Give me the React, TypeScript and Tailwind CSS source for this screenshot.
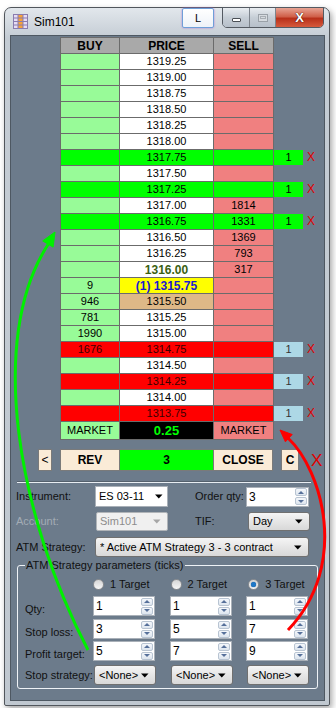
import React from 'react';

type Kind = 'n' | 'g' | 'r';
interface Row {
  price: string;
  buy?: string;
  sell?: string;
  kind?: Kind;
  order?: 'g' | 'b';
  special?: 'last' | 'ask' | 'bid';
}

const rows: Row[] = [
  { price: '1319.25' },
  { price: '1319.00' },
  { price: '1318.75' },
  { price: '1318.50' },
  { price: '1318.25' },
  { price: '1318.00' },
  { price: '1317.75', kind: 'g', order: 'g' },
  { price: '1317.50' },
  { price: '1317.25', kind: 'g', order: 'g' },
  { price: '1317.00', sell: '1814' },
  { price: '1316.75', sell: '1331', kind: 'g', order: 'g' },
  { price: '1316.50', sell: '1369' },
  { price: '1316.25', sell: '793' },
  { price: '1316.00', sell: '317', special: 'last' },
  { price: '(1) 1315.75', buy: '9', special: 'ask' },
  { price: '1315.50', buy: '946', special: 'bid' },
  { price: '1315.25', buy: '781' },
  { price: '1315.00', buy: '1990' },
  { price: '1314.75', buy: '1676', kind: 'r', order: 'b' },
  { price: '1314.50' },
  { price: '1314.25', kind: 'r', order: 'b' },
  { price: '1314.00' },
  { price: '1313.75', kind: 'r', order: 'b' },
];

const cell = 'shrink-0 flex items-center justify-center border-r border-b border-[#6b6b6b] leading-none';

const Arrow = () => (
  <svg className="shrink-0" width="8" height="5" viewBox="0 0 8 5">
    <path d="M0 0.5h7.5L3.75 4.5z" fill="#000" />
  </svg>
);

const Spin = ({ v, w }: { v: string; w: string }) => (
  <div className={`${w} shrink-0 h-[20px] bg-white border border-[#a9b0b8] flex items-center pl-[2px] text-[12px] text-black`}>
    <span className="flex-1">{v}</span>
    <div className="flex flex-col gap-[1px] mr-[1px]">
      <div className="w-[12px] h-[8px] rounded-[2px] border border-[#b8c4d2] bg-[linear-gradient(#f4f7fb,#dde5ee)] flex items-center justify-center">
        <svg width="6" height="3" viewBox="0 0 6 3"><path d="M0 3h6L3 0z" fill="#56709a" /></svg>
      </div>
      <div className="w-[12px] h-[8px] rounded-[2px] border border-[#b8c4d2] bg-[linear-gradient(#f4f7fb,#dde5ee)] flex items-center justify-center">
        <svg width="6" height="3" viewBox="0 0 6 3"><path d="M0 0h6L3 3z" fill="#56709a" /></svg>
      </div>
    </div>
  </div>
);

const Combo = ({ text, w, h = 'h-[20px]' }: { text: string; w: string; h?: string }) => (
  <div className={`${w} ${h} shrink-0 rounded-[3px] border border-[#707070] bg-[linear-gradient(#f5f5f5,#e6e6e6_50%,#d8d8d8)] flex items-center pl-[4px] pr-[6px] text-[11px] text-black`}>
    <span className="flex-1 whitespace-nowrap overflow-hidden">{text}</span>
    <Arrow />
  </div>
);

const Radio = ({ on, label, ml }: { on?: boolean; label: string; ml: string }) => (
  <div className={`${ml} flex items-center`}>
    <div className="w-[11px] h-[11px] rounded-full border border-[#8d8f92] bg-[linear-gradient(#d6d6d6,#f6f6f6)] flex items-center justify-center">
      {on && <div className="w-[5px] h-[5px] rounded-full bg-[#1e78c8] shadow-[0_0_1px_#0b3f78]" />}
    </div>
    <span className="ml-[6px] text-[11px] text-[#111] whitespace-nowrap">{label}</span>
  </div>
);

export default function App() {
  return (
    <div className="relative w-[336px] h-[708px] bg-white pt-[7px] pl-[4px] overflow-hidden font-['Liberation_Sans',Arial,sans-serif]">
      <div className="w-[326px] h-[699px] rounded-t-[7px] rounded-b-[2px] border border-[#51565c] bg-[linear-gradient(180deg,#e2e7ec,#c4ccd4_30px,#c0c8d0)] shadow-[2px_3px_6px_rgba(0,0,0,0.35)] flex flex-col">
        {/* title bar */}
        <div className="h-[27px] flex items-start">
          <div className="flex items-center h-[27px] ml-[8px] flex-1">
            <svg width="15" height="15" viewBox="0 0 15 15">
              <rect x="0.5" y="0.5" width="14" height="14" fill="#e6dcf5" stroke="#8a7cae" />
              <rect x="5" y="1" width="5" height="13" fill="#f6a23a" />
              <path d="M5 0.5v14M10 0.5v14M0.5 4h14M0.5 7.5h14M0.5 11h14" stroke="#8a7cae" strokeWidth="1" />
            </svg>
            <span className="ml-[6px] text-[12px] text-black">Sim101</span>
          </div>
          <div className="w-[32px] h-[20px] rounded-[2px] border border-[#6f9fd8] bg-[linear-gradient(#ffffff,#eef2f8)] shadow-[0_0_2px_#b070d0] flex items-center justify-center text-[11px] text-black">
            L
          </div>
          <div className="ml-[8px] mr-[5px] mt-[-1px] h-[21px] flex rounded-b-[5px] border border-[#545a62] overflow-hidden">
            <div className="w-[27px] h-full border-r border-[#7d848c] bg-[linear-gradient(#e9edf1,#c6ced6_50%,#b7c0ca)] flex items-center justify-center">
              <div className="w-[9px] h-[4px] mt-[4px] bg-white border border-[#4a4f55] rounded-[1px]" />
            </div>
            <div className="w-[26px] h-full border-r border-[#7d848c] bg-[linear-gradient(#e9edf1,#c6ced6_50%,#b7c0ca)] flex items-center justify-center">
              <div className="w-[10px] h-[8px] border border-[#9aa1a8] bg-[#d6dbe0] flex items-center justify-center">
                <div className="w-[6px] h-[3px] border border-[#a8aeb4]" />
              </div>
            </div>
            <div className="w-[47px] h-full bg-[linear-gradient(#e8a494,#d0604a_45%,#b8301a_55%,#d65a3c)] flex items-center justify-center">
              <span className="text-white font-bold text-[13px] leading-none [text-shadow:0_0_1px_#3a1008,0_0_1px_#3a1008]">X</span>
            </div>
          </div>
        </div>

        {/* client */}
        <div className="ml-[5px] w-[315px] h-[666px] border border-[#4e5862] bg-[#6c7b8b] flex flex-col">
          {/* ladder */}
          <div className="mt-[1px] flex flex-col">
            <div className="flex h-[17px] text-[12px] font-bold text-black">
              <div className="w-[49px] shrink-0" />
              <div className={`${cell} w-[60px] border-l border-t bg-[#a9a9a9]`}>BUY</div>
              <div className={`${cell} w-[94px] border-t bg-[#a9a9a9]`}>PRICE</div>
              <div className={`${cell} w-[60px] border-t bg-[#a9a9a9]`}>SELL</div>
            </div>
            {rows.map((r) => {
              const g = r.kind === 'g';
              const red = r.kind === 'r';
              const buyBg = g ? 'bg-[#00ff00]' : red ? 'bg-[#ff0000]' : 'bg-[#98fb98]';
              const sellBg = g ? 'bg-[#00ff00]' : red ? 'bg-[#ff0000]' : 'bg-[#f08080]';
              let priceCls = g ? 'bg-[#00ff00]' : red ? 'bg-[#ff0000]' : 'bg-white';
              let priceTxt = 'text-[11px]';
              if (r.special === 'last') priceTxt = 'text-[12px] font-bold text-[#3b5f12]';
              if (r.special === 'ask') {
                priceCls = 'bg-[#ffff00]';
                priceTxt = 'text-[12px] font-bold text-[#1a1ad0]';
              }
              if (r.special === 'bid') priceCls = 'bg-[#deb887]';
              const txt = red ? 'text-[#3a0000]' : 'text-black';
              return (
                <div key={r.price} className={`flex h-[16px] text-[11px] ${txt}`}>
                  <div className="w-[49px] shrink-0" />
                  <div className={`${cell} w-[60px] border-l ${buyBg}`}>{r.buy}</div>
                  <div className={`${cell} w-[94px] ${priceCls} ${priceTxt}`}>{r.price}</div>
                  <div className={`${cell} w-[60px] ${sellBg}`}>{r.sell}</div>
                  {r.order && (
                    <>
                      <div
                        className={`w-[29px] h-[15px] shrink-0 flex items-center justify-center text-[11px] ${
                          r.order === 'g' ? 'bg-[#00ff00] text-black' : 'bg-[#add8e6] text-[#333]'
                        }`}
                      >
                        1
                      </div>
                      <span className="ml-[4px] text-[12px] leading-[15px] text-[#e00000]">X</span>
                    </>
                  )}
                </div>
              );
            })}
            <div className="flex h-[18px] text-[11px] text-black">
              <div className="w-[49px] shrink-0" />
              <div className={`${cell} w-[60px] border-l bg-[#98fb98]`}>MARKET</div>
              <div className={`${cell} w-[94px] bg-black text-[#00ff00] text-[13px] font-bold`}>0.25</div>
              <div className={`${cell} w-[60px] bg-[#f08080]`}>MARKET</div>
            </div>
          </div>

          {/* buttons */}
          <div className="mt-[9px] h-[22px] flex items-stretch text-[12px] font-bold text-black">
            <div className="shrink-0 ml-[27px] w-[14px] border border-[#7a7a7a] bg-[#faebd7] flex items-center justify-center font-normal">&lt;</div>
            <div className="shrink-0 ml-[8px] w-[60px] border border-[#7a7a7a] bg-[#faebd7] flex items-center justify-center">REV</div>
            <div className="shrink-0 w-[93px] border-y border-[#7a7a7a] bg-[#00ff00] flex items-center justify-center">3</div>
            <div className="shrink-0 w-[60px] border border-[#7a7a7a] bg-[#faebd7] flex items-center justify-center">CLOSE</div>
            <div className="shrink-0 ml-[8px] w-[18px] border border-[#7a7a7a] bg-[#faebd7] flex items-center justify-center">C</div>
            <div className="shrink-0 ml-[12px] flex items-center text-[17px] leading-none font-normal text-[#e00000]">X</div>
          </div>

          {/* separator */}
          <div className="mt-[10px] ml-[6px] w-[294px] h-[2px] border-t border-b border-t-[#55616d] border-b-[#e8edf2]" />

          {/* form */}
          <div className="mt-[3px] flex items-center h-[21px] text-[11px] text-[#111] whitespace-nowrap">
            <span className="shrink-0 ml-[5px] w-[79px]">Instrument:</span>
            <div className="shrink-0 w-[73px] h-[21px] bg-white border border-[#a9b0b8] flex items-center pl-[3px] pr-[4px] text-[11px] text-black">
              <span className="flex-1">ES 03-11</span>
              <Arrow />
            </div>
            <span className="shrink-0 ml-[27px] w-[51px]">Order qty:</span>
            <Spin v="3" w="w-[63px]" />
          </div>
          <div className="mt-[5px] flex items-center h-[19px] text-[11px] text-[#111] whitespace-nowrap">
            <span className="shrink-0 ml-[5px] w-[80px] text-[#a3acb5]">Account:</span>
            <div className="shrink-0 w-[72px] h-[19px] rounded-[2px] bg-[#f0f0f0] border border-[#b0b4b8] flex items-center pl-[3px] pr-[6px] text-[11px] text-[#8c8c8c]">
              <span className="flex-1">Sim101</span>
              <svg width="8" height="5" viewBox="0 0 8 5"><path d="M0 0.5h7.5L3.75 4.5z" fill="#a6a6a6" /></svg>
            </div>
            <span className="shrink-0 ml-[27px] w-[53px]">TIF:</span>
            <Combo text="Day" w="w-[62px]" h="h-[19px]" />
          </div>
          <div className="mt-[6px] flex items-center h-[20px] text-[11px] text-[#111] whitespace-nowrap">
            <span className="shrink-0 ml-[5px] w-[79px]">ATM Strategy:</span>
            <Combo text="* Active ATM Strategy 3 - 3 contract" w="w-[214px]" />
          </div>

          {/* group box */}
          <div className="relative mt-[8px] ml-[6px] w-[301px] h-[124px] border border-[#eef2f6] rounded-[3px] text-[11px] text-[#111] whitespace-nowrap">
            <span className="absolute left-[7px] top-[-8px] px-[1px] bg-[#6c7b8b] leading-[14px]">ATM Strategy parameters (ticks)</span>
            <div className="mt-[11px] h-[14px] flex items-center">
              <Radio label="1 Target" ml="ml-[75px]" />
              <Radio label="2 Target" ml="ml-[21px]" />
              <Radio label="3 Target" ml="ml-[21px]" on />
            </div>
            <div className="mt-[5px] flex items-end h-[20px]">
              <span className="shrink-0 ml-[7px] w-[68px] leading-[14px]">Qty:</span>
              <Spin v="1" w="w-[62px]" />
              <div className="ml-[15px]"><Spin v="1" w="w-[62px]" /></div>
              <div className="ml-[14px]"><Spin v="1" w="w-[62px]" /></div>
            </div>
            <div className="mt-[3px] flex items-end h-[20px]">
              <span className="shrink-0 ml-[7px] w-[68px] leading-[14px]">Stop loss:</span>
              <Spin v="3" w="w-[62px]" />
              <div className="ml-[15px]"><Spin v="5" w="w-[62px]" /></div>
              <div className="ml-[14px]"><Spin v="7" w="w-[62px]" /></div>
            </div>
            <div className="mt-[2px] flex items-end h-[20px]">
              <span className="shrink-0 ml-[7px] w-[68px] leading-[14px]">Profit target:</span>
              <Spin v="5" w="w-[62px]" />
              <div className="ml-[15px]"><Spin v="7" w="w-[62px]" /></div>
              <div className="ml-[14px]"><Spin v="9" w="w-[62px]" /></div>
            </div>
            <div className="mt-[4px] flex items-center h-[20px]">
              <span className="shrink-0 ml-[7px] w-[69px]">Stop strategy:</span>
              <Combo text="<None>" w="w-[62px]" />
              <div className="ml-[15px]"><Combo text="<None>" w="w-[62px]" /></div>
              <div className="ml-[14px]"><Combo text="<None>" w="w-[62px]" /></div>
            </div>
          </div>
        </div>
      </div>

      {/* annotation arrows */}
      <svg className="absolute left-0 top-0 pointer-events-none" width="336" height="708" viewBox="0 0 336 708">
        <path d="M88 650 C20 520 -15 340 49 243" fill="none" stroke="#00f000" strokeWidth="3" />
        <path d="M55 232 L42.7 240.9 L53.1 247.1 Z" fill="#00f000" stroke="#00f000" strokeWidth="1" />
        <path d="M288 630 C350 565 322 470 288 438" fill="none" stroke="#ff0000" strokeWidth="3" />
        <path d="M280 430 L292.2 434.5 L285.4 441.8 Z" fill="#ff0000" stroke="#ff0000" strokeWidth="1" />
      </svg>
    </div>
  );
}
